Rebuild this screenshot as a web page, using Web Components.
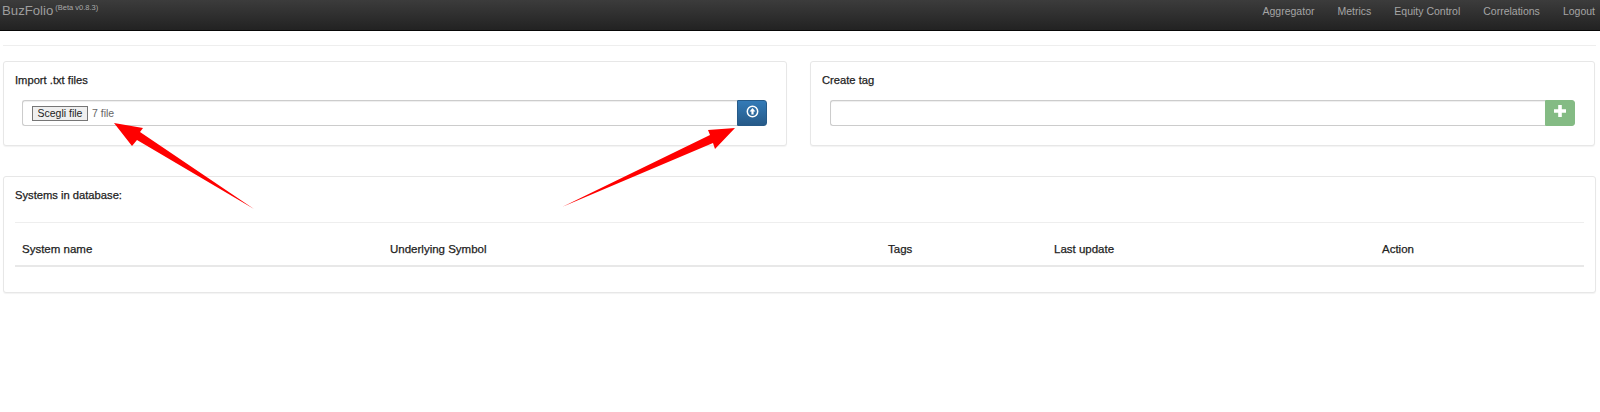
<!DOCTYPE html>
<html>
<head>
<meta charset="utf-8">
<title>BuzFolio</title>
<style>
    html, body { margin: 0; padding: 0; background: #fff; }
    body { position: relative; height: 412px; overflow: hidden; font-family: "Liberation Sans", Arial, sans-serif; }
</style>
</head>
<body>
<top-bar></top-bar>
<page-main></page-main>
<red-arrows></red-arrows>

<script>
class TopBar extends HTMLElement {
    constructor() {
        super();
        this.attachShadow({mode: 'open'}).innerHTML = `
            <style>
                :host { display: flex; justify-content: space-between; height: 30px; box-sizing: content-box;
                    background: linear-gradient(#3c3c3c, #222); border-bottom: 1px solid #080808;
                    padding: 0 5px 0 2px; color: #a5a5a5; }
                .brand { font-size: 13.2px; line-height: 22px; color: #9d9d9d; }
                sup { font-size: 7.5px; line-height: 0; vertical-align: baseline; position: relative; top: -5px; margin-left: 2px; color: #aaa; }
                nav { display: flex; gap: 23px; font-size: 10.5px; line-height: 23px; }
            </style>
            <div class="brand">BuzFolio<sup>(Beta v0.8.3)</sup></div>
            <nav>
                <span>Aggregator</span><span>Metrics</span><span>Equity Control</span><span>Correlations</span><span>Logout</span>
            </nav>`;
    }
}
customElements.define('top-bar', TopBar);

class BoxPanel extends HTMLElement {
    constructor() {
        super();
        this.attachShadow({mode: 'open'}).innerHTML = `
            <style>
                :host { display: block; box-sizing: border-box; background: #fff; border: 1px solid #e7e7e7;
                    border-radius: 3px; box-shadow: 0 1px 1px rgba(0,0,0,.05); padding: 11px; }
                h3 { margin: 0; font-size: 11.2px; line-height: 14px; font-weight: normal; color: #222;
                    -webkit-text-stroke: .25px #222; }
            </style>
            <h3><slot name="title"></slot></h3>
            <slot></slot>`;
    }
}
customElements.define('box-panel', BoxPanel);

class InputGroup extends HTMLElement {
    constructor() {
        super();
        this.attachShadow({mode: 'open'}).innerHTML = `
            <style>
                :host { display: flex; height: 26px; margin: 13px 8px 0 8px; }
                .field { flex: 1; box-sizing: border-box; display: flex; align-items: center; padding-left: 9px;
                    border: 1px solid #ccc; border-right: 0; border-radius: 3px 0 0 3px;
                    box-shadow: inset 0 1px 1px rgba(0,0,0,.07); font-size: 10.5px; color: #666; }
                button { width: 30px; height: 26px; padding: 0 0 4px; border: 1px solid #265a88; border-radius: 0 3px 3px 0;
                    display: flex; align-items: center; justify-content: center;
                    background: linear-gradient(#337ab7, #265a88); }
                :host([kind="success"]) button { background: #84bb84; border-color: #84bb84; }
            </style>
            <div class="field"><slot></slot></div>
            <button><slot name="icon"></slot></button>`;
    }
}
customElements.define('input-group', InputGroup);

class FakeFile extends HTMLElement {
    constructor() {
        super();
        this.attachShadow({mode: 'open'}).innerHTML = `
            <style>
                :host { display: flex; align-items: center; gap: 4px; }
                span.b { box-sizing: border-box; width: 56px; height: 15px; text-align: center; line-height: 13px;
                    border: 1px solid #767676; background: #efefef; color: #222; font-size: 10.5px; white-space: nowrap; }
            </style>
            <span class="b">Scegli file</span><span>7 file</span>`;
    }
}
customElements.define('fake-file', FakeFile);

class SystemsTable extends HTMLElement {
    constructor() {
        super();
        this.attachShadow({mode: 'open'}).innerHTML = `
            <style>
                :host { display: block; margin-top: 20px; border-top: 1px solid #eee; }
                .row { display: grid; grid-template-columns: 368px 498px 166px 328px 1fr; height: 44px; align-items: center;
                    box-sizing: border-box; padding: 10px 0 0 7px; border-bottom: 2px solid #e8e8e8; font-size: 11.5px; color: #222;
                    -webkit-text-stroke: .25px #222; }
            </style>
            <div class="row">
                <span>System name</span><span>Underlying Symbol</span><span>Tags</span><span>Last update</span><span>Action</span>
            </div>`;
    }
}
customElements.define('systems-table', SystemsTable);

class PageMain extends HTMLElement {
    constructor() {
        super();
        this.attachShadow({mode: 'open'}).innerHTML = `
            <style>
                :host { display: block; padding: 14px 4px 0 3px; }
                hr { margin: 0 0 15px; border: 0; border-top: 1px solid #eee; }
                .cols { display: grid; grid-template-columns: 784px 785px; column-gap: 23px; }
                .cols box-panel { height: 85px; }
                .sys { margin-top: 30px; height: 117px; }
                .first { margin-left: 7px; }
            </style>
            <hr>
            <div class="cols">
                <box-panel>
                    <span slot="title">Import .txt files</span>
                    <input-group class="first">
                        <fake-file></fake-file>
                        <svg slot="icon" width="13" height="13" viewBox="0 0 13 13">
                            <circle cx="6.5" cy="6.5" r="5.2" fill="none" stroke="#fff" stroke-width="1.5"/>
                            <path d="M6.5 2.9 L9.4 6.4 H7.6 V9.6 H5.4 V6.4 H3.6 Z" fill="#fff"/>
                        </svg>
                    </input-group>
                </box-panel>
                <box-panel>
                    <span slot="title">Create tag</span>
                    <input-group kind="success">
                        <svg slot="icon" width="12" height="12" viewBox="0 0 12 12">
                            <path d="M4.2 0 H7.8 V4.2 H12 V7.8 H7.8 V12 H4.2 V7.8 H0 V4.2 H4.2 Z" fill="#fff"/>
                        </svg>
                    </input-group>
                </box-panel>
            </div>
            <box-panel class="sys">
                <span slot="title">Systems in database:</span>
                <systems-table></systems-table>
            </box-panel>`;
    }
}
customElements.define('page-main', PageMain);

// the two red arrows lie over the page, in page coordinates
class RedArrows extends HTMLElement {
    constructor() {
        super();
        this.attachShadow({mode: 'open'}).innerHTML = `
            <style>
                :host { position: absolute; left: 0; top: 0; width: 1600px; height: 412px; pointer-events: none; }
                svg { display: block; }
            </style>
            <svg width="1600" height="412">
                <polygon fill="#f00" points="254,209 137,140 132,146 114,123 143,128 140,132"/>
                <polygon fill="#f00" points="562,207 713,143 715,149 735,128 708,130 710,135"/>
            </svg>`;
    }
}
customElements.define('red-arrows', RedArrows);
</script>
</body>
</html>
